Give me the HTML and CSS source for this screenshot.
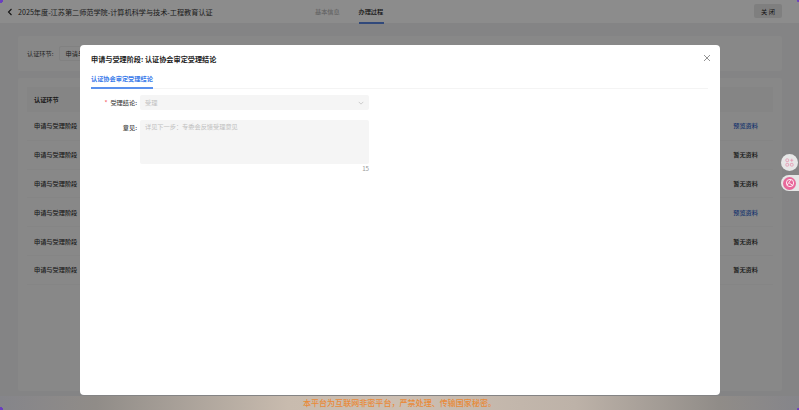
FILE: index.html
```html
<!DOCTYPE html>
<html lang="zh">
<head>
<meta charset="utf-8">
<title>办理过程</title>
<link rel="stylesheet" href="styles.css">
</head>
<body>
<div class="page">
  <header class="topbar">
    <div class="crumb">
      <svg class="back" viewBox="0 0 6 8" width="6" height="8"><path d="M4.5 1 1.5 4l3 3" fill="none" stroke="#222" stroke-width="1.1"/></svg>
      <span>2025年度-江苏第二师范学院-计算机科学与技术-工程教育认证</span>
    </div>
    <nav class="nav">
      <span class="nav-item">基本信息</span>
      <span class="nav-item nav-active">办理过程</span>
    </nav>
    <button class="close-btn">关 闭</button>
  </header>
  <main class="content">
    <section class="card filter">
      <span class="filter-label">认证环节:</span>
      <span class="filter-input">申请与受理阶段</span>
    </section>
    <section class="card list">
      <div class="row row-head"><span>认证环节</span></div>
      <div class="row"><span>申请与受理阶段</span><a class="link">预览资料</a></div>
      <div class="row"><span>申请与受理阶段</span><span class="none">暂无资料</span></div>
      <div class="row"><span>申请与受理阶段</span><span class="none">暂无资料</span></div>
      <div class="row"><span>申请与受理阶段</span><a class="link">预览资料</a></div>
      <div class="row"><span>申请与受理阶段</span><span class="none">暂无资料</span></div>
      <div class="row"><span>申请与受理阶段</span><span class="none">暂无资料</span></div>
    </section>
  </main>
  <footer class="notice">本平台为互联网非密平台，严禁处理、传输国家秘密。</footer>
</div>

<div class="mask"></div>
<div class="corners"></div>

<div class="float float-a">
  <svg viewBox="0 0 10 10" width="9" height="9" fill="none" stroke="#e594b0" stroke-width="0.9"><rect x="1" y="1" width="3" height="3" rx="0.8"/><rect x="1" y="6" width="3" height="3" rx="0.8"/><rect x="6" y="6" width="3" height="3" rx="0.8"/><path d="M7.5 0.8v3.4M5.8 2.5h3.4"/></svg>
</div>
<div class="float float-b">
  <span class="float-disc">
    <svg viewBox="0 0 12 12" width="10" height="10" fill="none" stroke="#fff" stroke-width="1"><circle cx="6" cy="6" r="4.4"/><path d="M2.5 8.5 7 2.2M5 6l4.6 3"/></svg>
  </span>
</div>

<div class="dialog">
  <div class="dialog-title">申请与受理阶段: 认证协会审定受理结论</div>
  <svg class="dialog-x" viewBox="0 0 8 8" width="8" height="8"><path d="M1 1l6 6M7 1 1 7" stroke="#777" stroke-width="0.8" fill="none"/></svg>
  <div class="tabs"><span class="tab">认证协会审定受理结论</span></div>
  <form class="form">
    <div class="field">
      <label class="field-label"><i class="req">*</i>受理结论:</label>
      <div class="select">
        <span>受理</span>
        <svg viewBox="0 0 8 5" width="6" height="4"><path d="M1 1l3 3 3-3" fill="none" stroke="#bbb" stroke-width="0.9"/></svg>
      </div>
    </div>
    <div class="field field-text">
      <label class="field-label">意见:</label>
      <div class="text-wrap">
        <div class="textarea">详见下一步：专委会反馈受理意见</div>
        <div class="count">15</div>
      </div>
    </div>
  </form>
</div>
</body>
</html>
```

FILE: styles.css
```css
* { box-sizing: border-box; }
html, body { margin: 0; height: 100%; overflow: hidden; }
body {
  font-family: "Noto Sans CJK SC", "Noto Sans", sans-serif;
  font-size: 6.2px;
  color: #333;
  background: #fff;
}
.page {
  width: 799px;
  height: 410px;
  display: flex;
  flex-direction: column;
  background: #f1f1f3;
}
.topbar {
  height: 23px;
  flex: none;
  display: flex;
  align-items: center;
  background: #ffffff;
  padding: 0 17px 0 7px;
}
.crumb {
  display: flex;
  align-items: center;
  gap: 5px;
  font-size: 7.15px;
  color: #333;
  width: 308px;
  white-space: nowrap;
}
.nav { display: flex; gap: 18.5px; height: 23px; }
.nav-item {
  line-height: 23px;
  color: #aaa;
  height: 24px;
  width: 25px;
  white-space: nowrap;
}
.nav-active {
  color: #222;
  font-weight: 500;
  border-bottom: 2px solid #5a86e0;
}
.close-btn {
  margin-left: auto;
  width: 28px;
  height: 14px;
  padding: 0;
  border: 0;
  border-radius: 2px;
  background: #e8e8e8;
  font: inherit;
  color: #222;
  margin-top: -1px;
}
.content {
  flex: 1;
  display: flex;
  flex-direction: column;
  gap: 7px;
  padding: 13px 17px 5px 18px;
  min-height: 0;
}
.card { background: #f7f7f7; border-radius: 2px; }
.filter {
  height: 35px;
  flex: none;
  display: flex;
  align-items: center;
  padding: 0 9px;
  gap: 6px;
}
.filter-label { color: #444; }
.filter-input {
  height: 15px;
  width: 80px;
  line-height: 13px;
  padding-left: 5px;
  border: 1px solid #ececec;
  border-radius: 2px;
  white-space: nowrap;
  overflow: hidden;
}
.list { flex: 1; padding: 9px 9px 0; }
.row {
  display: flex;
  justify-content: space-between;
  align-items: center;
  height: 28.8px;
  padding: 0 15px 0 7px;
  border-bottom: 1px solid #f2f2f2;
  color: #333;
  font-weight: 500;
}
.row-head {
  height: 25px;
  background: #f2f2f2;
  font-weight: 700;
  border-bottom: 0;
}
.link { color: #2a62c9; }
.none { color: #222; }
.notice {
  height: 14px;
  flex: none;
  text-align: center;
  line-height: 14px;
  font-size: 8.05px;
  font-weight: 500;
  color: #e98a38;
  position: relative;
  z-index: 2;
  background: linear-gradient(90deg, #85858a 0%, #908c88 12%, #c8bbae 36%, #cdbfb2 50%, #bdb2a8 72%, #908c88 90%, #85858a 100%);
}
.mask {
  position: absolute;
  inset: 0;
  background: rgba(0, 0, 0, 0.45);
}
.corners {
  position: absolute;
  inset: 0;
  z-index: 3;
  pointer-events: none;
  background:
    radial-gradient(circle at 0 0, #6a3fc0 3px, transparent 3.5px),
    radial-gradient(circle at 100% 0, #6a3fc0 2px, transparent 2.5px),
    radial-gradient(circle at 0 100%, #6a3fc0 3px, transparent 3.5px),
    radial-gradient(circle at 100% 100%, #6a3fc0 2px, transparent 2.5px);
}
.float {
  position: absolute;
  display: flex;
  align-items: center;
  justify-content: center;
  background: #e6e6e6;
}
.float-a {
  left: 781px; top: 154px;
  width: 17px; height: 17px;
  border-radius: 50%;
}
.float-b {
  left: 781px; top: 175px;
  width: 18px; height: 16px;
  border-radius: 8px 0 0 8px;
  justify-content: flex-start;
  padding-left: 2px;
}
.float-disc {
  width: 13px; height: 13px;
  border-radius: 50%;
  background: #e8689a;
  display: flex;
  align-items: center;
  justify-content: center;
}
.dialog {
  position: absolute;
  left: 80px; top: 45px;
  width: 640px; height: 350px;
  background: #fff;
  border-radius: 4px;
  padding: 0 11px;
}
.dialog-title {
  height: 29px;
  line-height: 29px;
  font-size: 7.15px;
  font-weight: 700;
  color: #222;
}
.dialog-x { position: absolute; right: 9px; top: 9px; }
.tabs {
  height: 15px;
  border-bottom: 1px solid #f4f4f4;
  width: 617px;
}
.tab {
  display: inline-block;
  height: 15px;
  font-weight: 700;
  color: #3a7bea;
  line-height: 9px;
  border-bottom: 2px solid #5a90ee;
  white-space: nowrap;
}
.form { padding-top: 6px; }
.field { display: flex; align-items: center; height: 15px; }
.field-text { align-items: flex-start; height: auto; margin-top: 10px; }
.field-label {
  width: 46px;
  margin-right: 3px;
  text-align: right;
  color: #444;
  font-weight: 500;
  line-height: 15px;
  white-space: nowrap;
}
.req { color: #f56c6c; font-style: normal; margin-right: 3px; }
.select {
  width: 229px;
  height: 15px;
  background: #f5f5f5;
  border-radius: 2px;
  display: flex;
  align-items: center;
  justify-content: space-between;
  padding: 0 5px;
  color: #c0c0c0;
}
.text-wrap { width: 229px; }
.textarea {
  height: 44px;
  background: #f5f5f5;
  border-radius: 2px;
  padding: 2px 5px;
  line-height: 10px;
  color: #c0c0c0;
}
.count { text-align: right; color: #999; line-height: 10px; }
```
